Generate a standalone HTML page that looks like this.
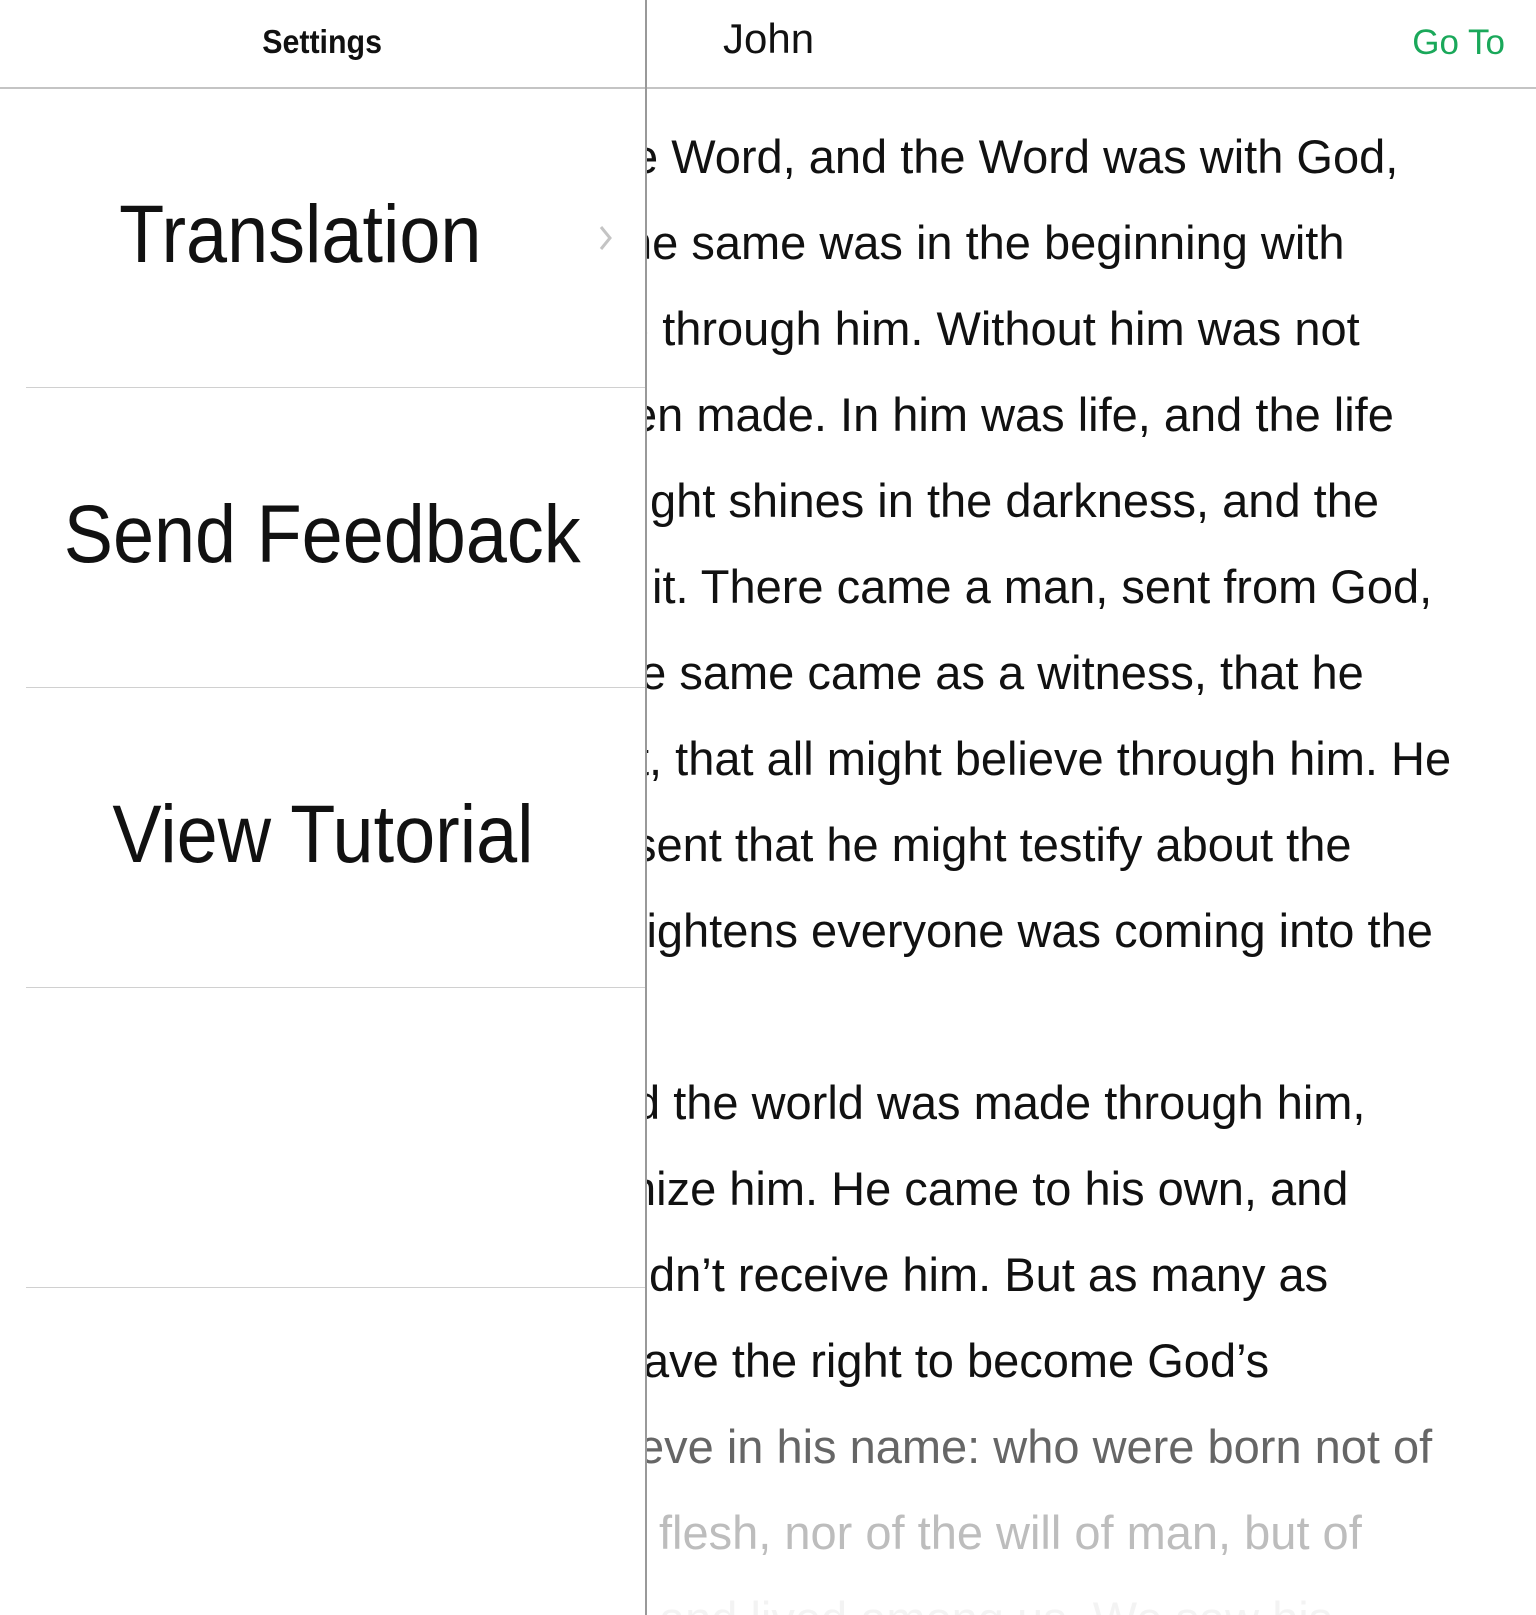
<!DOCTYPE html>
<html><head><meta charset="utf-8"><style>
html,body{margin:0;padding:0;background:#fff;}
body{width:1536px;height:1615px;position:relative;overflow:hidden;font-family:"Liberation Sans",sans-serif;color:#111;}
.hl{position:absolute;left:0;top:87px;width:1536px;height:2px;background:#c4c4c4;}
.vl{position:absolute;left:645px;top:0;width:2px;height:1615px;background:#999;z-index:5;}
.sep{position:absolute;left:26px;width:619px;height:1px;background:#d0d0d0;}
.row{position:absolute;left:0;width:645px;text-align:center;font-size:82px;line-height:100px;}
.row span{display:inline-block;transform:scaleX(0.9);}
.bib{position:absolute;left:647px;top:0;width:889px;height:1615px;overflow:hidden;}
.ln{position:absolute;font-size:47px;line-height:60px;white-space:nowrap;}
</style></head><body>
<div style="position:absolute;left:0;width:645px;top:20px;text-align:center;font-size:33px;font-weight:bold;line-height:44px;"><span style="display:inline-block;transform:scaleX(0.92)">Settings</span></div>
<div style="position:absolute;left:723px;top:14px;font-size:42px;line-height:50px;">John</div>
<div style="position:absolute;right:31px;top:20px;font-size:35px;line-height:46px;color:#1aa85a;">Go To</div>
<div class="hl"></div>
<div class="row" style="top:185px;left:-22px;"><span>Translation</span></div>
<svg style="position:absolute;left:598px;top:224px" width="16" height="28"><path d="M3 3 L12 14 L3 25" stroke="#c4c4c4" stroke-width="3" fill="none"/></svg>
<div class="sep" style="top:387px"></div>
<div class="row" style="top:485px"><span>Send Feedback</span></div>
<div class="sep" style="top:687px"></div>
<div class="row" style="top:785px"><span>View Tutorial</span></div>
<div class="sep" style="top:987px"></div>
<div class="sep" style="top:1287px"></div>
<div class="vl"></div>
<div class="bib">
<div class="ln" style="top:127px;left:-15px">e Word, and the Word was with God,</div>
<div class="ln" style="top:213px;left:-21px">he same was in the beginning with</div>
<div class="ln" style="top:299px;left:-24px">e through him. Without him was not</div>
<div class="ln" style="top:385px;left:-16px">en made. In him was life, and the life</div>
<div class="ln" style="top:471px;left:3px">ght shines in the darkness, and the</div>
<div class="ln" style="top:557px;left:5px">it. There came a man, sent from God,</div>
<div class="ln" style="top:643px;left:-33px">he same came as a witness, that he</div>
<div class="ln" style="top:729px;left:-11px">t, that all might believe through him. He</div>
<div class="ln" style="top:815px;left:-14px">sent that he might testify about the</div>
<div class="ln" style="top:901px;left:-11px">lightens everyone was coming into the</div>
<div class="ln" style="top:1073px;left:-13px">d the world was made through him,</div>
<div class="ln" style="top:1159px;left:-17px">nize him. He came to his own, and</div>
<div class="ln" style="top:1245px;left:2px">dn’t receive him. But as many as</div>
<div class="ln" style="top:1331px;left:-4px">ave the right to become God’s</div>
<div class="ln" style="top:1417px;left:-9px;color:#666">eve in his name: who were born not of</div>
<div class="ln" style="top:1503px;left:12px;color:#bdbdbd">flesh, nor of the will of man, but of</div>
<div class="ln" style="top:1589px;left:12px;color:#f3f3f3">and lived among us. We saw his</div>
</div>
</body></html>
